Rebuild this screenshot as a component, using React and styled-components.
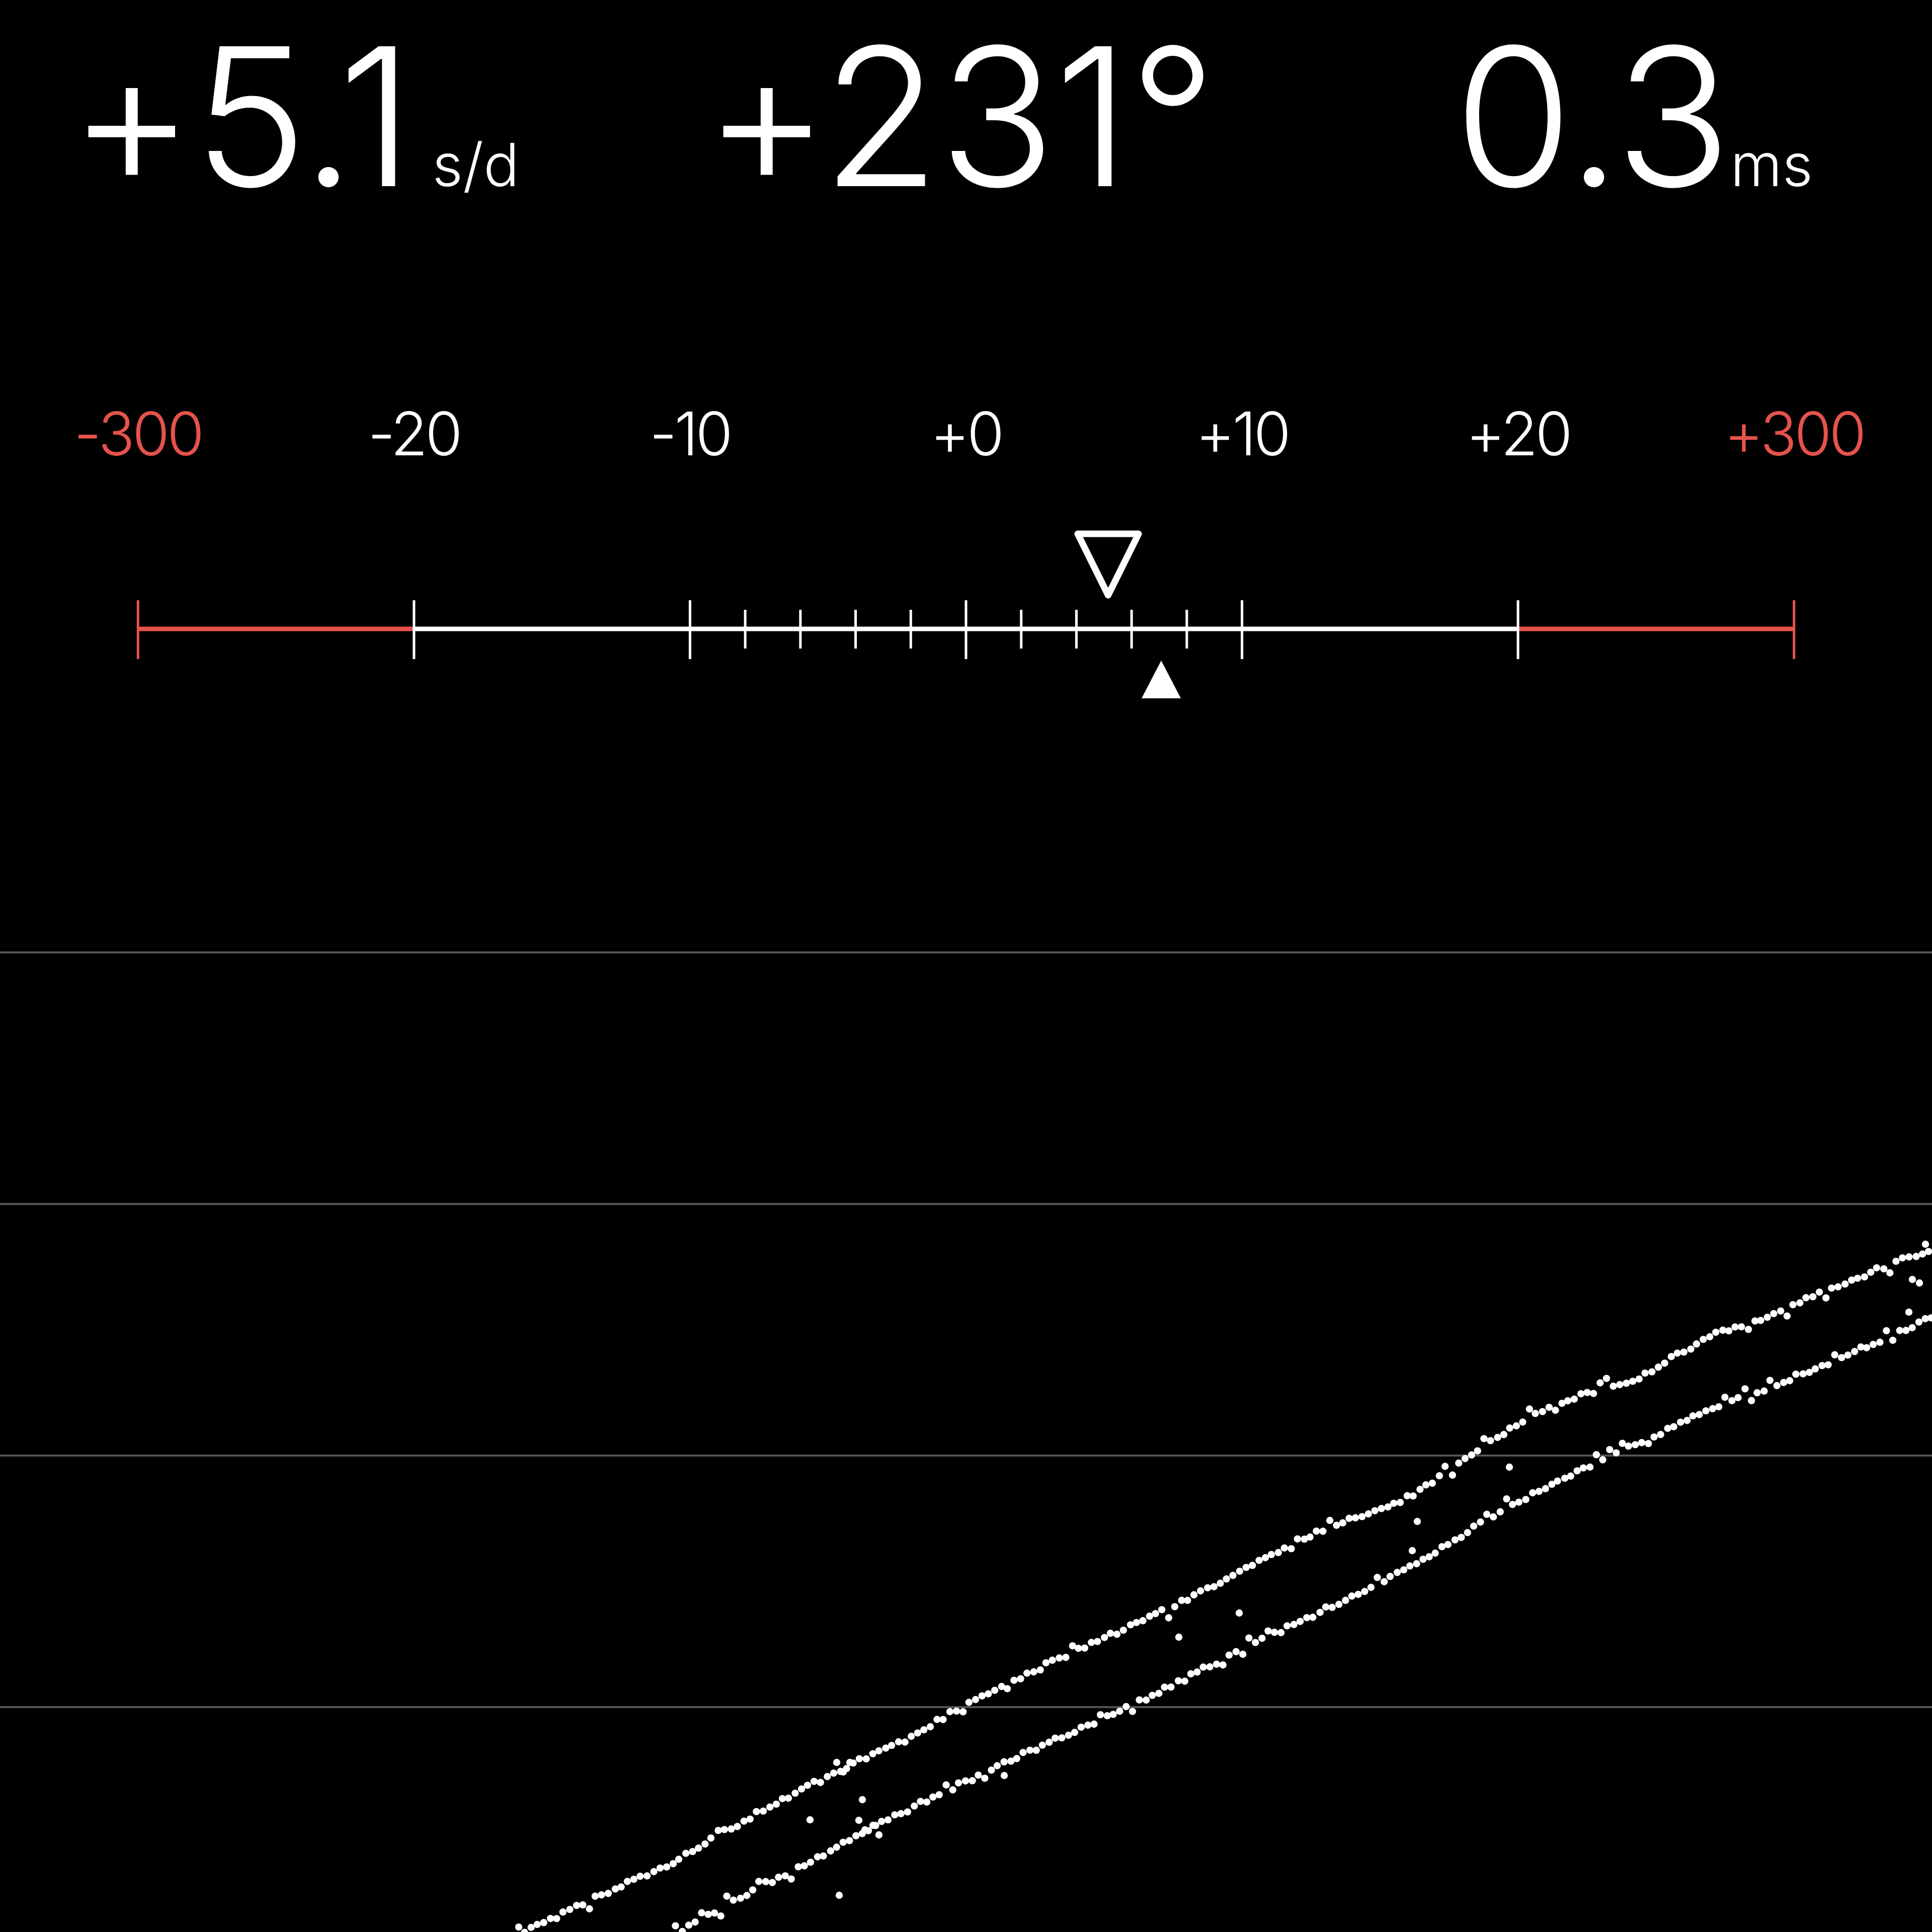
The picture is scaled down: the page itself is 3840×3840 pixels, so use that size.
import React from 'react';
import styled, { createGlobalStyle } from 'styled-components';

const GlobalStyle = createGlobalStyle`
  html, body {
    margin: 0;
    padding: 0;
    background: #000;
  }
`;

const RED = '#e5534c';

const Screen = styled.div`
  width: 3840px;
  height: 3840px;
  background: #000;
  color: #fff;
  overflow: hidden;
  display: flex;
  flex-direction: column;
  font-family: Inter, "Liberation Sans", sans-serif;
`;

const Readouts = styled.div`
  display: grid;
  grid-template-columns: 1262px 1491px 1fr;
  height: 802px;
  box-sizing: border-box;
  padding: 0 0 0 137px;
`;

const Readout = styled.div`
  font-size: 382px;
  font-weight: 300;
  line-height: normal;
  letter-spacing: -2px;
  white-space: nowrap;
`;

const Unit = styled.span`
  font-size: 118px;
  letter-spacing: 0;
  margin-left: ${({ $gap }) => $gap}px;
`;

const ScaleLabels = styled.div`
  display: grid;
  grid-template-columns: repeat(7, 1fr);
  height: 120px;
`;

const ScaleLabel = styled.div`
  text-align: center;
  font-size: 120px;
  font-weight: 300;
  line-height: 1;
  letter-spacing: -5px;
  color: ${({ $alert }) => ($alert ? RED : '#fff')};
`;

const Gauge = styled.svg`
  display: block;
  width: 3840px;
  height: 969px;
`;

const Chart = styled.div`
  position: relative;
  flex: 1;
  display: flex;
  flex-direction: column;
`;

const ChartRow = styled.div`
  height: ${({ $last }) => ($last ? 'auto' : '500px')};
  flex: ${({ $last }) => ($last ? 1 : 'none')};
  box-sizing: border-box;
  border-top: 4px solid #555;
`;

const Trace = styled.svg`
  position: absolute;
  inset: 0;
  width: 100%;
  height: 100%;
`;

const labels = [
  { text: '-300', alert: true },
  { text: '-20' },
  { text: '-10' },
  { text: '+0' },
  { text: '+10' },
  { text: '+20' },
  { text: '+300', alert: true },
];

const COL = 3840 / 7;
const majors = labels.map((l, i) => ({ x: COL * (i + 0.5), alert: l.alert }));
const minors = [-4, -3, -2, -1, 1, 2, 3, 4].map((k) => 1920 + (k * COL) / 5);

const LINE_Y = 1250;

// trace anchors, page coordinates
const TOP = [[1030, 3848], [1056, 3833], [1332, 3703], [1510, 3600], [1727, 3490], [1805, 3455], [1938, 3376], [2106, 3297], [2331, 3194], [2581, 3060], [2804, 2974], [2944, 2878], [3080, 2794], [3258, 2737], [3396, 2656], [3489, 2628], [3658, 2553], [3789, 2500], [3850, 2478]];
const LOW = [[1330, 3850], [1352, 3837], [1510, 3750], [1653, 3677], [1810, 3594], [2004, 3501], [2280, 3376], [2463, 3281], [2586, 3223], [2804, 3115], [3003, 2991], [3238, 2876], [3396, 2804], [3489, 2767], [3644, 2707], [3782, 2642], [3850, 2616]];
const STRAYS = [[1610, 3617], [1668, 3767], [1714, 3577], [1707, 3618], [1719, 3637], [1735, 3628], [1747, 3647], [1663, 3503], [1689, 3503], [1676, 3522], [1996, 3529], [2343, 3254], [2463, 3206], [2817, 3024], [2807, 3082], [3000, 2916], [3827, 2473], [3801, 2543], [3815, 2550], [3794, 2608]];

function lerp(pts, x) {
  for (let i = 0; i < pts.length - 1; i++) {
    const [x0, y0] = pts[i];
    const [x1, y1] = pts[i + 1];
    if (x >= x0 && x <= x1) return y0 + ((y1 - y0) * (x - x0)) / (x1 - x0);
  }
  return pts[pts.length - 1][1];
}

function mulberry(seed) {
  let a = seed;
  return () => {
    a |= 0;
    a = (a + 0x6d2b79f5) | 0;
    let t = Math.imul(a ^ (a >>> 15), 1 | a);
    t = (t + Math.imul(t ^ (t >>> 7), 61 | t)) ^ t;
    return ((t ^ (t >>> 14)) >>> 0) / 4294967296;
  };
}

function band(pts, seed) {
  const rnd = mulberry(seed);
  const dots = [];
  for (let x = pts[0][0]; x <= 3846; x += 12.8) {
    const r = rnd();
    let dy = (rnd() - 0.5) * 9;
    if (r < 0.07) dy -= 14;
    else if (r > 0.94) dy += 14;
    dots.push([x + (rnd() - 0.5) * 2, lerp(pts, x) + dy]);
  }
  return dots;
}

const dots = [...band(TOP, 7), ...band(LOW, 31), ...STRAYS];

function Ruler() {
  return (
    <Gauge viewBox="0 922 3840 969">
      <line x1={majors[0].x} y1={LINE_Y} x2={majors[1].x} y2={LINE_Y} stroke={RED} strokeWidth="9" />
      <line x1={majors[1].x} y1={LINE_Y} x2={majors[5].x} y2={LINE_Y} stroke="#fff" strokeWidth="9" />
      <line x1={majors[5].x} y1={LINE_Y} x2={majors[6].x} y2={LINE_Y} stroke={RED} strokeWidth="9" />
      {majors.map((m) => (
        <line key={m.x} x1={m.x} y1="1193" x2={m.x} y2="1310" stroke={m.alert ? RED : '#fff'} strokeWidth="5" />
      ))}
      {minors.map((x) => (
        <line key={x} x1={x} y1="1212" x2={x} y2="1289" stroke="#fff" strokeWidth="5" />
      ))}
      <polygon
        points="2142,1061 2263,1061 2202.5,1183"
        fill="none"
        stroke="#fff"
        strokeWidth="13"
        strokeLinejoin="round"
      />
      <polygon points="2269,1388 2347,1388 2308,1313" fill="#fff" />
    </Gauge>
  );
}

export default function App() {
  return (
    <>
      <GlobalStyle />
      <Screen>
        <Readouts>
          <Readout>
            +5.1<Unit $gap={39}>s/d</Unit>
          </Readout>
          <Readout>+231°</Readout>
          <Readout>
            0.3<Unit $gap={0}>ms</Unit>
          </Readout>
        </Readouts>
        <ScaleLabels>
          {labels.map((l) => (
            <ScaleLabel key={l.text} $alert={l.alert}>
              {l.text}
            </ScaleLabel>
          ))}
        </ScaleLabels>
        <Ruler />
        <Chart>
          <ChartRow />
          <ChartRow />
          <ChartRow />
          <ChartRow $last />
          <Trace viewBox="0 1891 3840 1949" preserveAspectRatio="none">
            {dots.map(([x, y], i) => (
              <circle key={i} cx={x.toFixed(1)} cy={y.toFixed(1)} r="7.2" fill="#fff" />
            ))}
          </Trace>
        </Chart>
      </Screen>
    </>
  );
}
